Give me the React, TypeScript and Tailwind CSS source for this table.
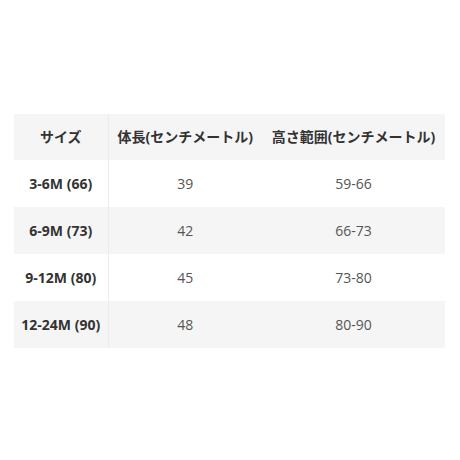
const rows = [
  { size: '3-6M (66)', height: '39', range: '59-66' },
  { size: '6-9M (73)', height: '42', range: '66-73' },
  { size: '9-12M (80)', height: '45', range: '73-80' },
  { size: '12-24M (90)', height: '48', range: '80-90' },
];

const font = "font-['Open_Sans','Noto_Sans_CJK_JP',sans-serif]";

export default function App() {
  return (
    <div className={`w-[460px] h-[460px] bg-white pt-[114px] pl-[14px] ${font}`}>
      <table className="w-[431px] border-collapse text-[14px] leading-none">
        <thead>
          <tr className="h-[46px] bg-[#f5f5f5] text-[#333] font-bold">
            <th className="w-[94px] text-center border-r border-[#ebebeb]">サイズ</th>
            <th className="w-[154px] text-center">体長(センチメートル)</th>
            <th className="text-center">高さ範囲(センチメートル)</th>
          </tr>
        </thead>
        <tbody>
          {rows.map((r, i) => (
            <tr key={r.size} className={`h-[47px] ${i % 2 === 1 ? 'bg-[#f5f5f5]' : 'bg-white'}`}>
              <td className="text-center font-bold text-[#333] border-r border-[#ebebeb]">{r.size}</td>
              <td className="text-center text-[#555]">{r.height}</td>
              <td className="text-center text-[#555]">{r.range}</td>
            </tr>
          ))}
        </tbody>
      </table>
    </div>
  );
}
